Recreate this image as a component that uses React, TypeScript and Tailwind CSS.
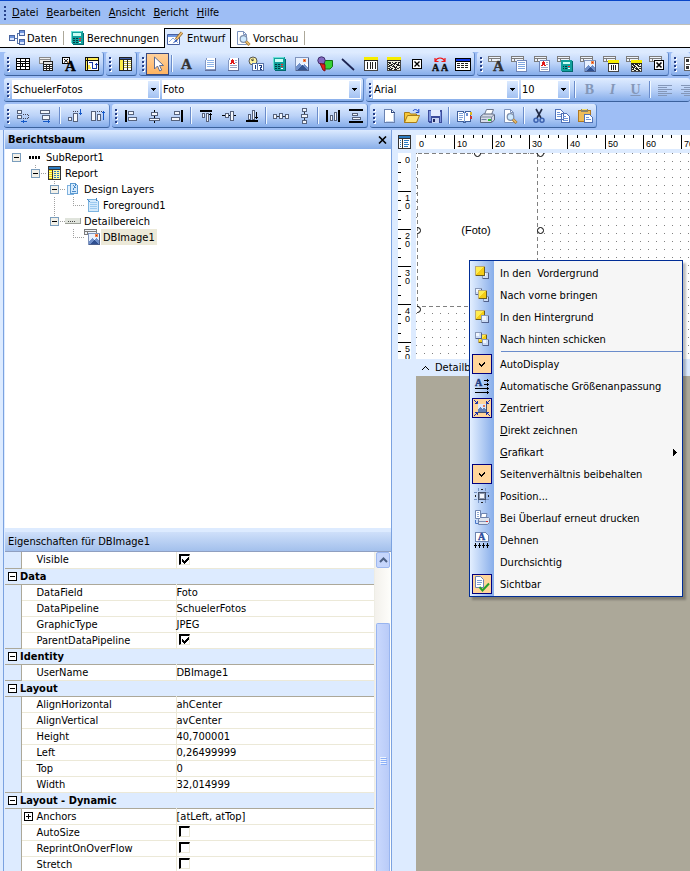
import type { ReactNode } from 'react';
import clsx from 'clsx';

type Children = { children?: ReactNode };

function Icon({ children }: Children) {
  return (
    <svg width="16" height="16" viewBox="0 0 16 16" shapeRendering="crispEdges" fill="none" className="shrink-0 overflow-visible" aria-hidden="true">
      {children}
    </svg>
  );
}

/* ---------- glyph parts, shared by several toolbar icons ---------- */

const Letter = ({ x = 2, y = 13, size = 15, fill = '#333' }: { x?: number; y?: number; size?: number; fill?: string }) => (
  <text x={x} y={y} fontSize={size} fontWeight="bold" fontFamily="Liberation Serif, serif" fill={fill} stroke={fill} strokeWidth=".4">A</text>
);

const Page = () => (
  <>
    <path d="M4 2h10v12H4zM3 4h1v11h10v-1H3z" fill="#8499c4" />
    <path d="M5 2h8v11H4V4h1z" fill="#fff" />
    <path d="M5 4.500h7M5 6.500h7M5 8.500h7M5 10.500h7" stroke="#8fb4e8" />
    <path d="M13.500 2v12M3 14.500h11" stroke="#5f6f9c" />
  </>
);

const RedPage = () => (
  <>
    <path d="M4 2h10v12H4zM3 4h1v11h10v-1H3z" fill="#8499c4" />
    <path d="M5 2h8v12H4V4h1z" fill="#fff" />
    <path d="M7 3h1v1h1v3h1v1H8V7H7v1H5V7h1V4h1z" fill="#e01818" />
    <path d="M10 4.500h2M10 6.500h2M5 9.500h7M5 11.500h7" stroke="#9aa6c4" />
    <path d="M13.500 2v12M3 14.500h11" stroke="#5f6f9c" />
  </>
);

const Calc = () => (
  <>
    <path d="M3 3h12v12H4l-1-1z" fill="#00686c" />
    <path d="M2 1h11l1 1v12H3l-1-1z" fill="#12a09c" />
    <path d="M2 1h11v1H3v11H2z" fill="#6ce0d4" />
    <path d="M4 3h8v3H4z" fill="#c8fff4" />
    <path d="M4 8h2v1H4zM7 8h2v1H7zM4 10h2v1H4zM7 10h2v1H7zM4 12h2v1H4zM7 12h2v1H7z" fill="#003c40" />
    <path d="M10 8h2v1h-2zM10 10h2v1h-2z" fill="#ff2020" />
    <path d="M10 12h2v1h-2z" fill="#fff" />
  </>
);

const Picture = () => (
  <>
    <path d="M1.500 1.500h13v13h-13z" fill="#e8f1ff" stroke="#7f94bc" />
    <path d="M2 14v-3l3-4 3 3 2-2 4 4v2z" fill="#7292cc" />
    <path d="M3 14l5-5 5 5z" fill="#34548f" />
    <path d="M9 3h3v3H9z" fill="#f28a4a" />
    <path d="M10 4h1v1h-1z" fill="#d02010" />
    <path d="M10 8l4 4V8z" fill="#fff" />
    <path d="M14.500 2v13M2 14.500h13" stroke="#4c5f8c" />
  </>
);

const Barcode = () => (
  <>
    <path d="M1.500 1.500h13v13h-13z" fill="#fff" stroke="#444" />
    <path d="M1 1h14v3H1z" fill="#f5ec00" />
    <path d="M1 4.500h14M4.500 6v7M7.500 6v7M9.500 6v7M12.500 6v7" stroke="#222" />
  </>
);

const Matrix = () => (
  <>
    <path d="M1.500 1.500h13v13h-13z" fill="#f2f2e0" stroke="#444" />
    <path d="M1 1h14v3H1z" fill="#f5ec00" />
    <path d="M1 4.500h14M2 6.500h3M6 6.500h1M9 6.500h2M12 6.500h2M3 7.500h2M7 7.500h3M12 7.500h1M2 8.500h1M5 8.500h2M8 8.500h1M10 8.500h3M3 9.500h3M7 9.500h1M11 9.500h3M2 10.500h2M6 10.500h3M10 10.500h1M4 11.500h1M8 11.500h3M13 11.500h1M2 12.500h2M5 12.500h2M9 12.500h1M11 12.500h2M3 13.500h3M8 13.500h3" stroke="#222" />
  </>
);

const BoxX = () => (
  <>
    <path d="M3.500 3.500h9v9h-9z" fill="#fff" stroke="#000" />
    <path shapeRendering="auto" d="M5.500 5.500l5 5M10.500 5.500l-5 5" stroke="#000" strokeWidth="1.400" />
  </>
);

const PageBlank = () => (
  <>
    <path d="M3.500 1.500h7l3 3v10h-10z" fill="#fff" stroke="#6a82b0" />
    <path d="M10.500 1.500v3h3" stroke="#334a80" />
    <path d="M12 6h1v8H5v-1h7z" fill="#c8d8f0" />
  </>
);

const Lens = () => (
  <g shapeRendering="auto">
    <path d="M2.500 1.500h6l3 3v10h-9z" fill="#fff" stroke="#7c93bd" />
    <path d="M8.500 1.500v3h3" stroke="#7c93bd" />
    <circle cx="8.500" cy="9" r="3.300" fill="#cfeaff" stroke="#7d8fac" strokeWidth="1.200" />
    <path d="M11 11.500l3.500 3.500" stroke="#a87830" strokeWidth="3" />
    <path d="M11.200 11.500l3 3" stroke="#ecc070" strokeWidth="1.400" />
  </g>
);

// grey field grid in the corner, with the component glyph over it
const DataBound = ({ children }: Children) => (
  <>
    <path d="M.5.5h12v5H.5zM.5 2.500h12M3.500 2.500v3" fill="#eef3fa" stroke="#7c7c7c" />
    {children}
  </>
);

const SmallPicture = () => (
  <>
    <path d="M4.500 4.500h11v11h-11z" fill="#e8f1ff" stroke="#7f94bc" />
    <path d="M5 15v-3l3-3 2 2 2-2 3 3v3z" fill="#6f8fca" />
    <path d="M6 15l4-4 4 4z" fill="#2f4f90" />
    <path d="M11 5h3v3h-3z" fill="#f28a4a" />
    <path d="M12 6h1v1h-1z" fill="#d02010" />
    <path d="M15.500 5v11M5 15.500h11" stroke="#4c5f8c" />
  </>
);

const ReportGlyph = () => (
  <>
    <path d="M2 1h13v14H2z" fill="#333" />
    <path d="M3 2h11v2H3z" fill="#2a7ac0" />
    <path d="M3 5h3v9H3zM7 5h7v9H7z" fill="#fff7a0" />
    <path d="M3 5.500h3M3 7.500h3M3 9.500h3M3 11.500h3M3 13.500h3" stroke="#f0d800" />
    <path d="M8 6.500h2M11 6.500h2M8 8.500h2M11 8.500h2M8 10.500h2M11 10.500h2M8 12.500h2M11 12.500h2" stroke="#2a7ac0" />
  </>
);

/* ---------- toolbars ---------- */

type Tool = { name: string; icon: ReactNode; active?: boolean } | '|';

const dataTools: Tool[] = [
  { name: 'Tabelle', icon: <><path d="M1 2h14v12H1z" fill="#000" /><path d="M2 3h3v2H2zM6 3h4v2H6zM11 3h3v2h-3zM2 6h3v1H2zM6 6h4v1H6zM11 6h3v1h-3zM2 8h3v2H2zM6 8h1v2H6zM8 8h2v2H8zM11 8h3v2h-3zM2 11h3v2H2zM6 11h4v2H6zM11 11h3v2h-3z" fill="#fff" /></> },
  { name: 'Datentabelle', icon: <><path d="M1.500 1.500h11v6h-11zM1.500 3.500h11" fill="#eee" stroke="#8a8a8a" /><path d="M5 5h10v10H5z" fill="#222" /><path d="M6 6h8v2H6z" fill="#e4e4e4" /><path d="M6 9h2v1H6zM9 9h2v1H9zM12 9h2v1h-2zM6 11h2v1H6zM9 11h2v1H9zM12 11h2v1h-2zM6 13h2v1H6zM9 13h2v1H9zM12 13h2v1h-2z" fill="#fff" /></> },
  { name: 'Beschriftung', icon: <><path d="M1.500 1.500h7v6h-7z" fill="#fff" stroke="#000" /><path shapeRendering="auto" d="M3 3l4 3.500M7 3L3 6.500" stroke="#000" /><Letter x={4} y={15} fill="#000" /></> },
  { name: 'Bereich', icon: <><path d="M1 1h14v14H1z" fill="#111" /><path d="M2 2h1v2H2zM4 2h10v2H4zM2 5h1v9H2z" fill="#ffec50" /><path d="M4 5h10v9H4z" fill="#fff" /><path d="M5 6.500h3v6M9 12.500h3v-5M10.500 9.500l2-2 1 2" stroke="#1838a8" /><path d="M4 9h2v2h1v2H4z" fill="#ffec50" /></> },
];

const reportTools: Tool[] = [
  { name: 'Berichtsbaum', icon: <><path d="M2 1h13v14H2z" fill="#222" /><path d="M3 2h11v1H3z" fill="#3d5ca8" /><path d="M3 4h3v10H3z" fill="#ffee48" /><path d="M7 4h3v10H7zM11 4h3v10h-3z" fill="#fff" /><path d="M7 5.500h3M7 7.500h3M7 9.500h3M7 11.500h3M11 5.500h3M11 7.500h3M11 9.500h3M11 11.500h3" stroke="#c4b840" /></> },
];

const designTools: Tool[] = [
  { name: 'Auswahl', active: true, icon: <path shapeRendering="auto" d="M4.500 1v12l3-3 2.200 5 2-.9L9.500 9.500h4z" fill="#fff" stroke="#5b6c94" /> },
  '|',
  { name: 'Text', icon: <Letter /> },
  { name: 'Memo', icon: <Page /> },
  { name: 'RichText', icon: <RedPage /> },
  { name: 'Systemvariable', icon: <g><g shapeRendering="auto"><circle cx="5" cy="5" r="4" fill="#fdf3a0" stroke="#555" /><path d="M5 2.500V5L3 3.500" stroke="#333" /></g><path d="M4.500 7.500h5v7h-5zM9.500 7.500h6v7h-6z" fill="#fff" stroke="#5873a8" /><path d="M7.500 9v4M11 9.500h2.500v2H12v1.500h2" stroke="#1a3c80" /></g> },
  { name: 'Variable', icon: <Calc /> },
  { name: 'Bild', icon: <Picture /> },
  { name: 'Form', icon: <g shapeRendering="auto"><path d="M7.500 4.500h8v6l-2.500 2.500h-5.500z" fill="#35d035" stroke="#147014" /><circle cx="4.500" cy="4.500" r="3.700" fill="#8268c0" stroke="#40306c" /><path d="M3 7.500l5 1v6.500l-2-1z" fill="#e81c1c" stroke="#801010" /></g> },
  { name: 'Linie', icon: <path shapeRendering="auto" d="M2 3l12 11" stroke="#1c2350" strokeWidth="1.700" /> },
  { name: 'Barcode', icon: <Barcode /> },
  { name: '2D-Barcode', icon: <Matrix /> },
  { name: 'Kontrollkästchen', icon: <BoxX /> },
  { name: 'Textersetzung', icon: <><Letter x={0} y={15} size={10} fill="#111" /><Letter x={9} y={15} size={10} fill="#111" /><path shapeRendering="auto" d="M3.500 5C5 1 11 1 12.500 5M3 2v3.500h3.500M13 2v3.500H9.500" stroke="#f01414" strokeWidth="1.200" /></> },
  { name: 'Gitter', icon: <><path d="M0 2h16v13H0z" fill="#000" /><path d="M1 3h14v2H1z" fill="#1038e8" /><path d="M1 6h14v8H1z" fill="#fff" /><path d="M2 7.500h12M2 9.500h12M2 11.500h12" stroke="#222" strokeDasharray="3 1" /></> },
];

const boundTools: Tool[] = [
  { name: 'DBText', icon: <DataBound><Letter x={5} y={15} size={15} /></DataBound> },
  { name: 'DBMemo', icon: <DataBound><path d="M5.500 5.500l1-1h9v11h-10z" fill="#fff" stroke="#6f86b8" /><path d="M7 6.500h7M7 8.500h7M7 10.500h7M7 12.500h7" stroke="#7fa6e0" /></DataBound> },
  { name: 'DBRichText', icon: <DataBound><path d="M5.500 5.500l1-1h9v11h-10z" fill="#fff" stroke="#6f86b8" /><path d="M9 5h1v1h1v3h1v1h-2V9H9v1H7V9h1V6h1z" fill="#e01818" /><path d="M12 6.500h2M12 8.500h2M7 11.500h7M7 13.500h7" stroke="#9aa6c4" /></DataBound> },
  { name: 'DBCalc', icon: <DataBound><path d="M5 5h11v11H5z" fill="#00686c" /><path d="M4 4h11v11H4z" fill="#12a09c" /><path d="M6 6h7v2H6z" fill="#c8fff4" /><path d="M6 10h1v1H6zM8 10h2v1H8zM6 12h1v1H6zM8 12h2v1H8z" fill="#003c40" /><path d="M11 10h2v1h-2z" fill="#ff2020" /><path d="M11 12h2v1h-2z" fill="#fff" /></DataBound> },
  { name: 'DBImage', icon: <DataBound><SmallPicture /></DataBound> },
  { name: 'DBBarcode', icon: <DataBound><path d="M5.500 4.500h10v11h-10z" fill="#fff" stroke="#444" /><path d="M5 4h11v3H5z" fill="#f5ec00" /><path d="M5 7.500h11M8.500 9v5M10.500 9v5M12.500 9v5" stroke="#222" /></DataBound> },
  { name: 'DB2DBarcode', icon: <DataBound><path d="M5.500 4.500h10v11h-10z" fill="#f2f2e0" stroke="#444" /><path d="M5 4h11v3H5z" fill="#f5ec00" /><path d="M5 7.500h11M6 8.500h2M9 8.500h3M13 8.500h1M7 9.500h2M11 9.500h2M6 10.500h1M8 10.500h2M12 10.500h3M6 11.500h3M10 11.500h1M7 12.500h1M9 12.500h3M13 12.500h2M6 13.500h2M10 13.500h3M8 14.500h2M12 14.500h2" stroke="#222" /></DataBound> },
  { name: 'DBCheckbox', icon: <DataBound><path d="M5.500 4.500h9v9h-9z" fill="#fff" stroke="#000" strokeWidth="1" /><path shapeRendering="auto" d="M7.500 6.500l5 5M12.500 6.500l-5 5" stroke="#000" strokeWidth="1.600" /></DataBound> },
];

const regionTools: Tool[] = [
  { name: 'Region', icon: <><path d="M2.500 1.500h13v13h-13z" fill="#fff" stroke="#666" /><path d="M4 3h3v3H4zM4 10h3v3H4z" fill="#333" /><path d="M9 3.500h5M9 5.500h5M4 8.500h10M9 10.500h5M9 12.500h5" stroke="#555" /></> },
];

const Small = ({ d }: { d: string }) => <path d={d} fill="#f4f7fc" stroke="#56627c" />;

const sizeTools: Tool[] = [
  { name: 'Nach links', icon: <><Small d="M2.500 2.500h4v3h-4zM2.500 7.500h4v3h-4z" /><path d="M8 6.500h6M8 10.500h6M13.500 7v4" stroke="#445" strokeDasharray="1 1" /><path d="M6 13.500h6M8 12v3M7 13v1" stroke="#1458c8" /></> },
  { name: 'Nach rechts', icon: <><Small d="M2.500 2.500h9v3h-9zM4.500 7.500h7v4h-7z" /><path d="M5 13.500h6M10 12v3M11 13v1" stroke="#1458c8" /></> },
  '|',
  { name: 'Nach unten', icon: <><Small d="M1.500 9.500h3v3h-3zM6.500 5.500h4v8h-4z" /><path d="M6 3.500h5" stroke="#445" strokeDasharray="1 1" /><path d="M13.500 1v6M12 5.500h3" stroke="#1458c8" /></> },
  { name: 'Nach oben', icon: <><Small d="M1.500 3.500h4v9h-4zM7.500 6.500h3v6h-3z" /><path d="M7 3.500h5" stroke="#445" strokeDasharray="1 1" /><path d="M13.500 3v9M12 4.500h3" stroke="#1458c8" /></> },
];

const alignTools: Tool[] = [
  { name: 'Links ausrichten', icon: <><path d="M2 2h2v12H2z" fill="#000" /><Small d="M5.500 3.500h5v3h-5zM5.500 9.500h8v3h-8z" /></> },
  { name: 'Horizontal zentrieren', icon: <><path d="M8 2h1v13H8z" fill="#000" /><Small d="M5.500 4.500h6v3h-6zM3.500 10.500h10v2h-10z" /></> },
  { name: 'Rechts ausrichten', icon: <><path d="M12 2h2v12h-2z" fill="#000" /><Small d="M5.500 3.500h5v3h-5zM2.500 9.500h8v3h-8z" /></> },
  '|',
  { name: 'Oben ausrichten', icon: <><path d="M2 2h12v2H2z" fill="#000" /><Small d="M4.500 5.500h2v4h-2zM8.500 5.500h2v8h-2z" /><path d="M12.500 5v7M11 6.500h3" stroke="#000" /></> },
  { name: 'Vertikal zentrieren', icon: <><path d="M1 7h14v1H1z" fill="#000" /><Small d="M4.500 5.500h3v4h-3zM9.500 3.500h3v9h-3z" /></> },
  { name: 'Unten ausrichten', icon: <><path d="M2 12h12v2H2z" fill="#000" /><Small d="M4.500 6.500h2v5h-2zM8.500 2.500h2v9h-2z" /><path d="M12.500 4v7M11 9.500h3" stroke="#000" /></> },
  '|',
  { name: 'Horizontal verteilen', icon: <><path d="M1 8.500h14" stroke="#333" /><Small d="M.5 6.500h3v4h-3zM6.500 5.500h3v5h-3zM12.500 6.500h3v4h-3z" /></> },
  { name: 'Vertikal verteilen', icon: <><path d="M8.500 1v14" stroke="#333" /><Small d="M6.500.5h4v3h-4zM5.500 6.500h6v3h-6zM6.500 12.500h4v3h-4z" /></> },
  '|',
  { name: 'Abstand horizontal', icon: <><path d="M1 2h2v12H1zM13 2h2v12h-2z" fill="#000" /><Small d="M5.500 7.500h2v5h-2zM9.500 4.500h2v8h-2z" /></> },
  { name: 'Abstand vertikal', icon: <><path d="M1 1h14v2H1zM1 13h14v2H1z" fill="#000" /><Small d="M4.500 5.500h5v2h-5zM4.500 9.500h8v2h-8z" /></> },
];

const fileTools: Tool[] = [
  { name: 'Neu', icon: <PageBlank /> },
  { name: 'Öffnen', icon: <g shapeRendering="auto"><path d="M.5 14.500v-10h5l1 1.500h6v8z" fill="#f8c838" stroke="#a87c18" /><path d="M.5 14.500l3-7h12l-3 7z" fill="#ffe478" stroke="#a87c18" /><path d="M9 3c1-2 4-2 5 .5M14.800 1v3.500h-3" stroke="#1440c8" /></g> },
  { name: 'Speichern', icon: <><path d="M1 2h14v13H2l-1-1z" fill="#3c4c9c" /><path d="M2 3h2v10H2zM13 4h1v10h-1z" fill="#7c94dc" /><path d="M4 2h9v6H4z" fill="#e4ecff" /><path d="M5 10h7v5H5z" fill="#c8d4f4" /><path d="M6 11h2v3H6z" fill="#20285c" /></> },
  '|',
  { name: 'Thema', icon: <><path d="M1.500 3.500h5l2 1 2-1h4v10h-4l-2 1-2-1h-5z" fill="#fff" stroke="#40609c" /><path d="M8.500 4v10M3 5.500h4M3 7.500h4M3 9.500h4M3 11.500h3" stroke="#7fa2d8" /><path d="M10 5h2v3h-2z" fill="#6d8fd0" /><path d="M14 4h2v3h-2z" fill="#e0b820" /><path d="M14 8h2v3h-2z" fill="#d03030" /></> },
  { name: 'Drucken', icon: <g shapeRendering="auto"><path d="M5.500 6.500l2-5h7l-2 5z" fill="#fff" stroke="#6d7890" /><path d="M1.500 8.500l3-2.500h10l1 1v5l-3 2.500h-11z" fill="#d8dce8" stroke="#5c6880" /><path d="M1.500 9h11l3-2.500M12.500 9v5" stroke="#7a869e" /><path d="M9 11h3v2H9z" fill="#32c032" /><path d="M2.500 11.500h5" stroke="#7080a0" /></g> },
  { name: 'Seitenansicht', icon: <Lens /> },
  '|',
  { name: 'Ausschneiden', icon: <g shapeRendering="auto"><path d="M5 1l5 9M11 1l-5 9" stroke="#222c48" strokeWidth="1.600" /><circle cx="5" cy="12.300" r="2" stroke="#3c62b0" strokeWidth="1.500" /><circle cx="11" cy="12.300" r="2" stroke="#3c62b0" strokeWidth="1.500" /></g> },
  { name: 'Kopieren', icon: <><path d="M1.500 1.500h5l3 3v7h-8zM7.500 5.500h5l3 3v6h-8z" fill="#fff" stroke="#5072b8" /><path d="M3 4.500h3M3 6.500h4M3 8.500h4M9 8.500h3M9 10.500h5M9 12.500h5" stroke="#6f94d8" /></> },
  { name: 'Einfügen', icon: <><path d="M1 2h13v12H1z" fill="#b07820" /><path d="M2 3h11v10H2z" fill="#eebc58" /><path d="M4 1h7v3H4z" fill="#8c8468" /><path d="M5 1h5v1H5z" fill="#f8e070" /><path d="M7.500 6.500h5l3 3v5h-8z" fill="#fff" stroke="#5072b8" /><path d="M9 9.500h3M9 11.500h5" stroke="#6f94d8" /></> },
];

function Toolbar({ label, children, open }: Children & { label: string; open?: boolean }) {
  return (
    <div
      role="toolbar"
      aria-label={label}
      className={clsx(
        'flex h-6 shrink-0 items-center rounded-[3px] border-b border-[#3b619c] bg-gradient-to-b from-[#dfecff] via-[#bcd3f8] to-[#86adea]',
        open ? 'min-w-0 flex-1' : 'border-r border-r-[#5c86c8]',
      )}
    >
      <svg width="7" height="16" className="shrink-0" shapeRendering="crispEdges" aria-hidden="true">
        {[1, 5, 9, 13].map(y => (
          <g key={y}>
            <path d={`M4 ${y + 1}h2v2h-2z`} fill="#fff" />
            <path d={`M3 ${y}h2v2h-2z`} fill="#27418a" />
          </g>
        ))}
      </svg>
      {children}
    </div>
  );
}

function Divider() {
  return <span className="mx-[2px] h-[17px] w-[2px] shrink-0 border-l border-r border-l-[#6a8ccb] border-r-[#f1f9ff]" />;
}

function Tools({ items }: { items: Tool[] }) {
  return items.map((t, i) =>
    t === '|' ? (
      <Divider key={i} />
    ) : (
      <button
        key={i}
        type="button"
        aria-label={t.name}
        className={clsx('flex h-[22px] w-[23px] shrink-0 items-center justify-center', t.active && 'border border-[#3a4a80] bg-gradient-to-b from-[#ffd09a] to-[#ffb460]')}
      >
        <Icon>{t.icon}</Icon>
      </button>
    ),
  );
}

function Combo({ label, value, className }: { label: string; value: string; className: string }) {
  return (
    <div className={clsx('relative mr-[2px] h-[19px] shrink-0', className)}>
      <select aria-label={label} defaultValue={value} className="block h-full w-full appearance-none bg-white pl-px leading-[19px] outline-none">
        <option>{value}</option>
      </select>
      <span className="pointer-events-none absolute inset-y-px right-px flex w-[11px] items-center justify-center bg-gradient-to-b from-[#dceaff] to-[#a2c1f2]">
        <svg width="5" height="3" shapeRendering="crispEdges" aria-hidden="true"><path d="M0 0h5v1H4v1H3v1H2V2H1V1H0z" /></svg>
      </span>
    </div>
  );
}

function AlignLines({ short }: { short: string }) {
  return (
    <>
      <path d="M1 3.500h14M1 7.500h14M1 11.500h14" stroke="#8497b8" />
      <path d={short} stroke="#8497b8" />
    </>
  );
}

const textAligns: Tool[] = [
  { name: 'Linksbündig', icon: <AlignLines short="M1 5.500h9M1 9.500h9M1 13.500h9" /> },
  { name: 'Zentriert', icon: <AlignLines short="M4 5.500h9M4 9.500h9M4 13.500h9" /> },
];

function Toolbars() {
  return (
    <div className="flex flex-col gap-[2px] overflow-hidden border-t-4 border-[#ddebff] bg-[#9ebef5] pb-[2px] pl-1">
      <div className="flex gap-[2px]">
        <Toolbar label="Daten"><Tools items={dataTools} /></Toolbar>
        <Toolbar label="Ansicht"><Tools items={reportTools} /></Toolbar>
        <Toolbar label="Standardkomponenten"><Tools items={designTools} /></Toolbar>
        <Toolbar label="Datenkomponenten"><Tools items={boundTools} /></Toolbar>
        <Toolbar label="Erweitert" open><Tools items={regionTools} /></Toolbar>
      </div>
      <div className="flex gap-[2px]">
        <Toolbar label="Datenfeld">
          <Combo label="Pipeline" value="SchuelerFotos" className="ml-px w-[148px]" />
          <Combo label="Feld" value="Foto" className="w-[199px]" />
        </Toolbar>
        <Toolbar label="Format" open>
          <Combo label="Schriftart" value="Arial" className="w-[146px]" />
          <Combo label="Schriftgröße" value="10" className="w-[49px]" />
          <Divider />
          <button type="button" aria-label="Fett" className="w-[23px] shrink-0 font-['Liberation_Serif',serif] text-[14px] font-bold text-[#8497b8]">B</button>
          <button type="button" aria-label="Kursiv" className="w-[23px] shrink-0 font-['Liberation_Serif',serif] text-[14px] font-bold text-[#8497b8] italic">I</button>
          <button type="button" aria-label="Unterstrichen" className="w-[23px] shrink-0 font-['Liberation_Serif',serif] text-[14px] font-bold text-[#8497b8] underline">U</button>
          <Divider />
          <Tools items={textAligns} />
        </Toolbar>
      </div>
      <div className="flex gap-[2px]">
        <Toolbar label="Größe"><Tools items={sizeTools} /></Toolbar>
        <Toolbar label="Ausrichten"><Tools items={alignTools} /></Toolbar>
        <Toolbar label="Datei"><Tools items={fileTools} /></Toolbar>
      </div>
    </div>
  );
}

/* ---------- menu bar and tabs ---------- */

function MenuBar() {
  return (
    <nav className="flex h-6 shrink-0 items-center gap-2 border-t border-[#0a46c8] bg-[#9ebef5] pl-1">
      <svg width="3" height="14" shapeRendering="crispEdges" className="-mr-[3px]" aria-hidden="true">
        {[0, 4, 8, 12].map(y => <path key={y} d={`M0 ${y}h2v2h-2z`} fill="#27418a" />)}
      </svg>
      {['Datei', 'Bearbeiten', 'Ansicht', 'Bericht', 'Hilfe'].map(m => (
        <button key={m} type="button" className="pt-px"><u>{m[0]}</u>{m.slice(1)}</button>
      ))}
    </nav>
  );
}

const tabs = [
  { name: 'Daten', width: 'w-[63px]', icon: <><path d="M5 8.500h3M8.500 3v11M8 3.500h3M8 13.500h3" stroke="#5572a8" /><path d="M.5 5.500h5v5h-5zM10.500.5h5v5h-5zM10.500 9.500h5v5h-5z" fill="#dce8ff" stroke="#4864a0" /><path d="M1 6h4v2H1zM11 1h4v2h-4zM11 10h4v2h-4z" fill="#6f94dc" /></> },
  { name: 'Berechnungen', width: 'w-[100px]', icon: <Calc /> },
  { name: 'Entwurf', width: 'w-[67px]', icon: <g shapeRendering="auto"><path d="M.5 3.500h12v10H.5z" fill="#fff" stroke="#4860a0" /><path d="M1 4h11v2H1z" fill="#7098e0" /><path d="M2 11l4-4 5 5" stroke="#88a8dc" /><path d="M15 1.500l-6 7" stroke="#8c6428" strokeWidth="3" /><path d="M15 1.500l-6 7" stroke="#f4c478" strokeWidth="1.500" /><path d="M9.500 8l-4 4.500 5-2.500z" fill="#3058b8" /></g> },
  { name: 'Vorschau', width: 'w-[74px]', icon: <Lens /> },
];

function Tabs() {
  return (
    <div role="tablist" className="flex h-6 shrink-0 items-end border-t border-b border-t-[#c0c0b8] border-b-black bg-white pl-px">
      {tabs.map(t => {
        const active = t.name === 'Entwurf';
        return (
          <button
            key={t.name}
            role="tab"
            type="button"
            aria-selected={active}
            className={clsx(
              'flex shrink-0 items-center whitespace-nowrap',
              t.width,
              active ? '-mb-px h-5 gap-1 border border-b-0 border-black bg-[#ddebff] pl-[2px]' : 'mb-[2px] h-[14px] gap-[2px]',
              t.name === 'Daten' && 'border-r border-[#aca899] pl-2',
              t.name === 'Berechnungen' && 'pl-[5px]',
              t.name === 'Vorschau' && 'border-r border-[#aca899] pl-[4px]',
            )}
          >
            <Icon>{t.icon}</Icon>
            <span className="pt-px">{t.name}</span>
          </button>
        );
      })}
    </div>
  );
}

/* ---------- report tree ---------- */

const layerPage = <><path d="M4.500 2.500h8l2 2v10h-10z" fill="#d4eafc" stroke="#7cb4e0" /><path d="M6 5.500h7M6 7.500h7M6 9.500h7M6 11.500h7" stroke="#9ccaf0" /><path d="M3 2l3 3M12 1l1 3" stroke="#4888c8" /></>;

const tree = [
  { label: 'SubReport1', level: 0, guides: '', open: true, icon: <path d="M2 7h2v3H2zM5 7h2v3H5zM8 7h2v3H8zM11 7h2v3h-2z" fill="#000" /> },
  { label: 'Report', level: 1, guides: 'M35.500 0v4M41 8.500h5', open: true, icon: <ReportGlyph /> },
  { label: 'Design Layers', level: 2, guides: 'M54.500 0v4M60 8.500h5', open: true, icon: <><path d="M2.500 4.500h6v9h-6z" fill="#e6f3ff" stroke="#7fb2de" /><path d="M5.500 2.500h5l2 2v8h-7z" fill="#d4eafc" stroke="#5c9ad0" /><path d="M8 4l3 3M11 3l-3 6M7 10.500h4" stroke="#4888c8" /></> },
  { label: 'Foreground1', level: 3, guides: 'M54.500 0v16M73.500 0v9M73 8.500h11', icon: layerPage },
  { label: 'Detailbereich', level: 2, guides: 'M54.500 0v4M60 8.500h5', open: true, icon: <><path d="M0 5h16v6H0z" fill="#9ca098" /><path d="M0 5h15v5H0z" fill="#e0e4dc" /><path d="M3 8.500h8" stroke="#444" strokeDasharray="1 1" /></> },
  { label: 'DBImage1', level: 3, guides: 'M73.500 0v9M73 8.500h11', selected: true, icon: <DataBound><SmallPicture /></DataBound> },
];

function ReportTree() {
  return (
    <section className="flex h-[398px] shrink-0 flex-col bg-white">
      <header className="flex h-[19px] shrink-0 items-center justify-between bg-gradient-to-b from-[#dceaff] to-[#88aee8] pr-1 pl-[3px]">
        <h2 className="font-bold">Berichtsbaum</h2>
        <button type="button" aria-label="Schließen">
          <svg width="9" height="8" aria-hidden="true"><path d="M1 .5l7 7M8 .5l-7 7" stroke="#000" strokeWidth="1.600" /></svg>
        </button>
      </header>
      <ul role="tree" aria-label="Berichtsbaum">
        {tree.map(n => {
          const x = 7 + 19 * n.level;
          return (
            <li key={n.label} role="treeitem" aria-selected={!!n.selected} className="flex h-4 items-center">
              <svg width={x + 15} height="16" viewBox={`5 0 ${x + 15} 16`} shapeRendering="crispEdges" className="shrink-0" aria-hidden="true">
                <path d={n.guides} stroke="#a0a0a0" strokeDasharray="1 1" />
                {n.open && (
                  <g transform={`translate(${x + 5} 4)`}>
                    <path d="M.5.5h8v8h-8z" fill="#f2f0e8" stroke="#7b9ebd" />
                    <path d="M2 4h5v1H2z" fill="#000" />
                  </g>
                )}
              </svg>
              <Icon>{n.icon}</Icon>
              <span className={clsx('ml-px h-4 px-[2px] pt-px', n.selected && 'bg-[#ece9d8]')}>{n.label}</span>
            </li>
          );
        })}
      </ul>
    </section>
  );
}

/* ---------- property grid ---------- */

type Prop = [name: string, value: string | boolean];

const groups: { title?: string; props: Prop[] }[] = [
  { props: [['Visible', true]] },
  { title: 'Data', props: [['DataField', 'Foto'], ['DataPipeline', 'SchuelerFotos'], ['GraphicType', 'JPEG'], ['ParentDataPipeline', true]] },
  { title: 'Identity', props: [['UserName', 'DBImage1']] },
  { title: 'Layout', props: [['AlignHorizontal', 'ahCenter'], ['AlignVertical', 'avCenter'], ['Height', '40,700001'], ['Left', '0,26499999'], ['Top', '0'], ['Width', '32,014999']] },
  { title: 'Layout - Dynamic', props: [['Anchors', '[atLeft, atTop]'], ['AutoSize', false], ['ReprintOnOverFlow', false], ['Stretch', false]] },
];

function Expander({ plus }: { plus?: boolean }) {
  return (
    <svg width="9" height="9" shapeRendering="crispEdges" className="shrink-0" aria-hidden="true">
      <path d="M.5.5h8v8h-8z" fill="#fff" stroke="#000" />
      <path d={plus ? 'M2 4h5v1H2zM4 2h1v5H4z' : 'M2 4h5v1H2z'} fill="#000" />
    </svg>
  );
}

function PropertyGrid() {
  return (
    <section className="flex min-h-0 flex-1 flex-col">
      <header className="mt-1 flex h-5 shrink-0 items-center border-b border-[#8f9fc0] bg-gradient-to-b from-[#cfe0fa] to-[#a3c0ec] pl-[3px]">
        <h2 className="pt-px">Eigenschaften für DBImage1</h2>
      </header>
      <div className="flex min-h-0 flex-1">
        <div className="min-w-0 flex-1 overflow-hidden">
          <table className="w-full table-fixed border-collapse">
            <colgroup>
              <col className="w-4" />
              <col className="w-[155px]" />
              <col />
            </colgroup>
            {groups.map((g, i) => (
              <tbody key={i}>
                {g.title && (
                  <tr className="h-4 border-t border-b border-[#aca899] bg-[#ddebff]">
                    <th colSpan={3} scope="rowgroup" className="p-0 text-left">
                      <span className="flex h-[15px] items-center gap-[3px] pl-[3px]">
                        <Expander />
                        <span className="pt-px">{g.title}</span>
                      </span>
                    </th>
                  </tr>
                )}
                {g.props.map(([name, value]) => (
                  <tr key={name} className="h-4">
                    <td className="border-r border-[#aca899] bg-[#ddebff] p-0" />
                    <th scope="row" className="border-r border-b border-[#ece9d8] bg-white p-0 text-left font-normal">
                      <span className={clsx('flex h-[15px] items-center', name === 'Anchors' ? 'gap-[4px] pl-[2px]' : 'pl-[15px]')}>
                        {name === 'Anchors' && <Expander plus />}
                        <span className="pt-px">{name}</span>
                      </span>
                    </th>
                    <td className="border-b border-[#ece9d8] bg-white p-0">
                      <span className="flex h-[15px] items-center">
                        {typeof value === 'string' ? <span className="pt-px">{value}</span> : (
                          <span className="relative ml-[2px] h-[12px] w-[11px]">
                            <input type="checkbox" aria-label={name} defaultChecked={value} className="peer block h-[11px] w-[11px] appearance-none border-t-2 border-r border-b border-l-2 border-t-black border-r-[#ece9d8] border-b-[#ece9d8] border-l-black" />
                            <svg width="7" height="7" shapeRendering="crispEdges" className="pointer-events-none absolute top-[3px] left-[3px] hidden peer-checked:block" aria-hidden="true">
                              <path d="M0 2h1v1h1v1h1V3h1V2h1V1h1V0h1v3H6v1H5v1H4v1H3v1H2V6H1V5H0z" />
                            </svg>
                          </span>
                        )}
                      </span>
                    </td>
                  </tr>
                ))}
              </tbody>
            ))}
          </table>
        </div>
        <div className="flex w-[17px] shrink-0 flex-col border-l border-[#eeede5] bg-gradient-to-r from-[#f3f1ec] to-[#fefefb]">
          <button type="button" aria-label="Nach oben blättern" className="mx-px flex h-4 shrink-0 items-center justify-center rounded-[2px] border border-[#9db8f0] bg-[#c6d6fc]">
            <svg width="9" height="6" aria-hidden="true"><path d="M1 5l3.500-3.500L8 5" stroke="#4d6185" strokeWidth="2" fill="none" /></svg>
          </button>
          <div className="mx-px mt-[55px] flex flex-1 justify-center rounded-t-[2px] border border-b-0 border-[#98b5f0] bg-gradient-to-r from-[#c9d8fd] to-[#b9cbf8]">
            <svg width="7" height="8" shapeRendering="crispEdges" className="mt-[133px]" aria-hidden="true">
              <path d="M0 .5h6M0 2.500h6M0 4.500h6M0 6.500h6" stroke="#eef4fe" />
              <path d="M1 1.500h6M1 3.500h6M1 5.500h6M1 7.500h6" stroke="#8cb0f8" />
            </svg>
          </div>
        </div>
      </div>
    </section>
  );
}

/* ---------- design surface ---------- */

const MM = 3.78;
const label = { fontSize: 9, fontFamily: 'Liberation Sans, sans-serif', fill: '#000' };

function HorizontalRuler() {
  const steps = Array.from({ length: 80 }, (_, i) => i);
  return (
    <svg height="14" className="block min-w-0 flex-1 bg-white" shapeRendering="crispEdges" aria-hidden="true">
      {steps.map(i => {
        const x = Math.round(i * 2.5 * MM);
        if (i % 4) return <path key={i} d={`M${x} 0h1v3h-1z`} />;
        return (
          <g key={i}>
            {i > 0 && <path d={`M${x} 0h1v14h-1z`} />}
            <text x={x + 3} y="12" {...label}>{(i / 4) * 10}</text>
          </g>
        );
      })}
    </svg>
  );
}

function VerticalRuler() {
  const steps = Array.from({ length: 22 }, (_, i) => i);
  return (
    <svg width="13" height="206" className="mx-auto block bg-white" shapeRendering="crispEdges" aria-hidden="true">
      {steps.map(i => {
        const y = Math.round(i * 2.5 * MM);
        if (i % 4) return <path key={i} d={`M0 ${y}h3v1h-3z`} />;
        return (
          <g key={i}>
            {i > 0 && <path d={`M0 ${y}h13v1h-13z`} />}
            {String((i / 4) * 10).split('').map((c, k) => (
              <text key={k} x="7" y={y + 10 + k * 8} {...label}>{c}</text>
            ))}
          </g>
        );
      })}
    </svg>
  );
}

function Surface() {
  const handles = [[61, 0], [124, 0], [1, 77], [124, 77], [1, 156]];
  return (
    <svg width="100%" height="206" className="block bg-white" role="img" aria-label="Detailbereich">
      <defs>
        <pattern id="dots" width="8" height="8" patternUnits="userSpaceOnUse">
          <path d="M0 0h1v1H0z" fill="#808080" shapeRendering="crispEdges" />
        </pattern>
      </defs>
      <rect width="100%" height="100%" fill="url(#dots)" />
      <rect x="1.500" y=".5" width="120" height="153" fill="#fff" stroke="#808080" strokeDasharray="4 3" shapeRendering="crispEdges" />
      {handles.map(([x, y]) => <circle key={`${x}-${y}`} cx={x + 0.5} cy={y + 0.5} r="3" fill={x === 1 ? 'none' : '#fff'} stroke="#000" />)}
      <path d="M0 70h1v90H0z" fill="#fff" />
      <text x="60" y="81" textAnchor="middle" fontSize="11" fontFamily="Liberation Sans, sans-serif">(Foto)</text>
    </svg>
  );
}

function Designer() {
  return (
    <main className="flex min-w-0 flex-1 flex-col bg-[#ddebff]">
      <div className="flex h-[23px] shrink-0 items-center">
        <div className="flex w-6 shrink-0 justify-center"><Icon><path d="M2 1h13v14H2z" fill="#333" /><path d="M3 2h11v2H3z" fill="#2a7ac0" /><path d="M3 5h3v9H3zM7 5h7v9H7z" fill="#fff" /><path d="M4 6.500h1M4 8.500h1M4 10.500h1M4 12.500h1M8 6.500h5M8 8.500h4M8 10.500h5M8 12.500h4" stroke="#2a7ac0" /></Icon></div>
        <HorizontalRuler />
      </div>
      <div className="flex min-h-0 flex-1">
        <div className="w-6 shrink-0"><VerticalRuler /></div>
        <div className="flex min-w-0 flex-1 flex-col">
          <Surface />
          <div className="flex h-[17px] shrink-0 items-center gap-[6px] pl-[6px]">
            <svg width="7" height="4" shapeRendering="crispEdges" aria-hidden="true"><path d="M0 3h1v1H0zM1 2h1v1H1zM2 1h1v1H2zM3 0h1v1H3zM4 1h1v1H4zM5 2h1v1H5zM6 3h1v1H6z" /></svg>
            <span className="pt-px">Detailbereich</span>
          </div>
          <div className="flex-1 bg-[#aca899]" />
        </div>
      </div>
    </main>
  );
}

/* ---------- context menu ---------- */

const yellow = (x: number, y: number, s = 8) => (
  <>
    <rect x={x} y={y} width={s} height={s} fill="#b8a878" />
    <path d={`M${x + s - 1} ${y + 1}h1v${s - 1}h-${s - 1}v-1h${s - 2}z`} fill="#6c5c20" />
    <rect x={x + 1} y={y + 1} width={s - 2} height={s - 2} fill="#f4cc18" />
    <path d={`M${x + 1} ${y + 1}h${s - 3}l-${s - 3} ${s - 3}z`} fill="#ffec50" />
  </>
);
const grey = (x: number, y: number, s = 7) => (
  <>
    <rect x={x} y={y} width={s} height={s} fill="#8a9ab8" />
    <path d={`M${x + s - 1} ${y + 1}h1v${s - 1}h-${s - 1}v-1h${s - 2}z`} fill="#50608c" />
    <rect x={x + 1} y={y + 1} width={s - 2} height={s - 2} fill="#ccdcf6" />
    <rect x={x + 1} y={y + 1} width={s - 4} height={s - 4} fill="#f0f6ff" />
  </>
);

const checkIcon = <path d="M5 7h1v1h1v1h1V8h1V7h1V6h1v2h-1v1H9v1H8v1H7v-1H6V9H5z" fill="#000" />;

type Entry = { text: string; icon?: ReactNode; checked?: boolean; accel?: boolean; sub?: boolean };

const entries: (Entry | '-')[] = [
  { text: 'In den\u00a0 Vordergrund', icon: <>{grey(8, 7, 7)}{yellow(1, 1, 10)}</> },
  { text: 'Nach vorne bringen', icon: <>{grey(1, 1)}{grey(9, 9, 6)}{yellow(4, 3, 9)}</> },
  { text: 'In den Hintergrund', icon: <>{yellow(1, 1, 10)}{grey(7, 6, 8)}</> },
  { text: 'Nach hinten schicken', icon: <>{yellow(4, 4, 8)}{yellow(7, 3, 6)}{grey(1, 1)}{grey(8, 8)}</> },
  '-',
  { text: 'AutoDisplay', checked: true, icon: checkIcon },
  { text: 'Automatische Größenanpassung', icon: <><Letter x={1} y={8} size={10} fill="#1c3c80" /><path d="M10 2.500h5M10 6.500h5M1 10.500h14M1 14.500h14M13.500 1v3M13.500 5v3M13.500 9v3M13.500 13v3" stroke="#000" /></> },
  { text: 'Zentriert', checked: true, icon: <><path d="M4 4h8v8H4z" fill="#dce8fc" /><path d="M4 12V9l2-2 2 2 2-1 2 2v2z" fill="#6080b8" /><path d="M9 5h2v2H9z" fill="#e87850" /><path d="M12.500 4v9M4 12.500h9" stroke="#44506c" /><path shapeRendering="auto" d="M0 0l3.500 3.500M16 0l-3.500 3.500M0 16l3.500-3.500M16 16l-3.500-3.500M1 3.500h2.500V1M15 3.500h-2.500V1M1 12.500h2.500V15M15 12.500h-2.500V15" stroke="#1830a8" /></> },
  { text: 'Direkt zeichnen', accel: true },
  { text: 'Grafikart', accel: true, sub: true },
  { text: 'Seitenverhältnis beibehalten', checked: true, icon: checkIcon },
  { text: 'Position...', icon: <><path d="M4.500 0v16M11.500 0v16M0 4.500h16M0 11.500h16" stroke="#7894c4" strokeDasharray="3 1" /><path d="M4.500 4.500h7v7h-7z" fill="#f4f8ff" stroke="#445068" /><path d="M5.500 5.500h5v5h-5z" stroke="#8c98b0" /><path d="M7 1h2v1H7zM7 14h2v1H7zM1 7h1v2H1zM14 7h1v2h-1z" fill="#222" /></> },
  { text: 'Bei Überlauf erneut drucken', icon: <g shapeRendering="auto"><path d="M1.500.5h5v8h-5z" fill="#fff" stroke="#6d84b0" /><path d="M3 2.500h2M3 4.500h2M3 6.500h2" stroke="#8fa8d4" /><path d="M6.500 8.500l1-5h5.500l-1 5z" fill="#fff" stroke="#6d84b0" /><path d="M4.500 9.500l2-2h8l1 1v4l-2 2h-9z" fill="#dfe5f0" stroke="#6d80a8" /><path d="M5 11.500h8" stroke="#7c8fb4" /><path d="M12 11h2v1h-2z" fill="#e03030" /><path d="M1.500 10v3.500H4" stroke="#4a78c8" /></g> },
  { text: 'Dehnen', icon: <><path d="M1.500.5h10l3 3v6h-13z" fill="#fff" stroke="#6d84b0" /><Letter x={4} y={8} size={10} fill="#2c4c9c" /><path d="M1.500 11v5M5.500 11v5M9.500 11v5M13.500 11v5M0 13.500h3M4 13.500h3M8 13.500h3M12 13.500h3" stroke="#000" /></> },
  { text: 'Durchsichtig' },
  { text: 'Sichtbar', checked: true, icon: <g shapeRendering="auto"><path d="M1.500.5h5l3 3v8h-8z" fill="#fff" stroke="#6c84b4" /><path d="M3 4.500h5M3 6.500h5M3 8.500h4" stroke="#7f9fd0" /><path d="M5.500 11l3 3.500L15 7.500" stroke="#28a028" strokeWidth="2" /></g> },
];

function ContextMenu() {
  return (
    <div role="menu" className="absolute top-[260px] left-[469px] w-[214px] border border-[#002d96] bg-[#f6f6f6] bg-[linear-gradient(to_right,#e3efff,#87adea_24px,transparent_24px)] py-px shadow-[3px_3px_2px_rgba(0,0,0,0.25)]">
      {entries.map((e, i) =>
        e === '-' ? (
          <div key={i} role="separator" className="my-px ml-[31px] h-px bg-[#6a8ccb]" />
        ) : (
          <button
            key={i}
            type="button"
            role={e.checked ? 'menuitemcheckbox' : 'menuitem'}
            aria-checked={e.checked}
            className="flex h-[22px] w-full items-center gap-[7px] pl-px text-left"
          >
            <span className={clsx('mx-px flex h-5 w-5 shrink-0 items-center justify-center', e.checked && 'border border-[#000080] bg-[#ffd59a]')}>
              <Icon>{e.icon}</Icon>
            </span>
            <span className="flex-1 pt-[2px] whitespace-nowrap">{e.accel ? <><u>{e.text[0]}</u>{e.text.slice(1)}</> : e.text}</span>
            {e.sub && <svg width="4" height="7" shapeRendering="crispEdges" className="mr-[5px]" aria-hidden="true"><path d="M0 0h1v1h1v1h1v1h1v1H3v1H2v1H1v1H0z" /></svg>}
          </button>
        ),
      )}
    </div>
  );
}

export default function App() {
  return (
    <div className="relative flex h-screen flex-col overflow-hidden bg-[#ddebff] font-['DejaVu_Sans_Condensed','DejaVu_Sans',sans-serif] text-[11px] leading-4 text-black">
      <MenuBar />
      <Tabs />
      <Toolbars />
      <div className="flex min-h-0 flex-1">
        <aside className="ml-[3px] flex w-[389px] shrink-0 flex-col border-r border-l border-[#7ba2e0] pl-px">
          <ReportTree />
          <PropertyGrid />
        </aside>
        <Designer />
      </div>
      <ContextMenu />
    </div>
  );
}
